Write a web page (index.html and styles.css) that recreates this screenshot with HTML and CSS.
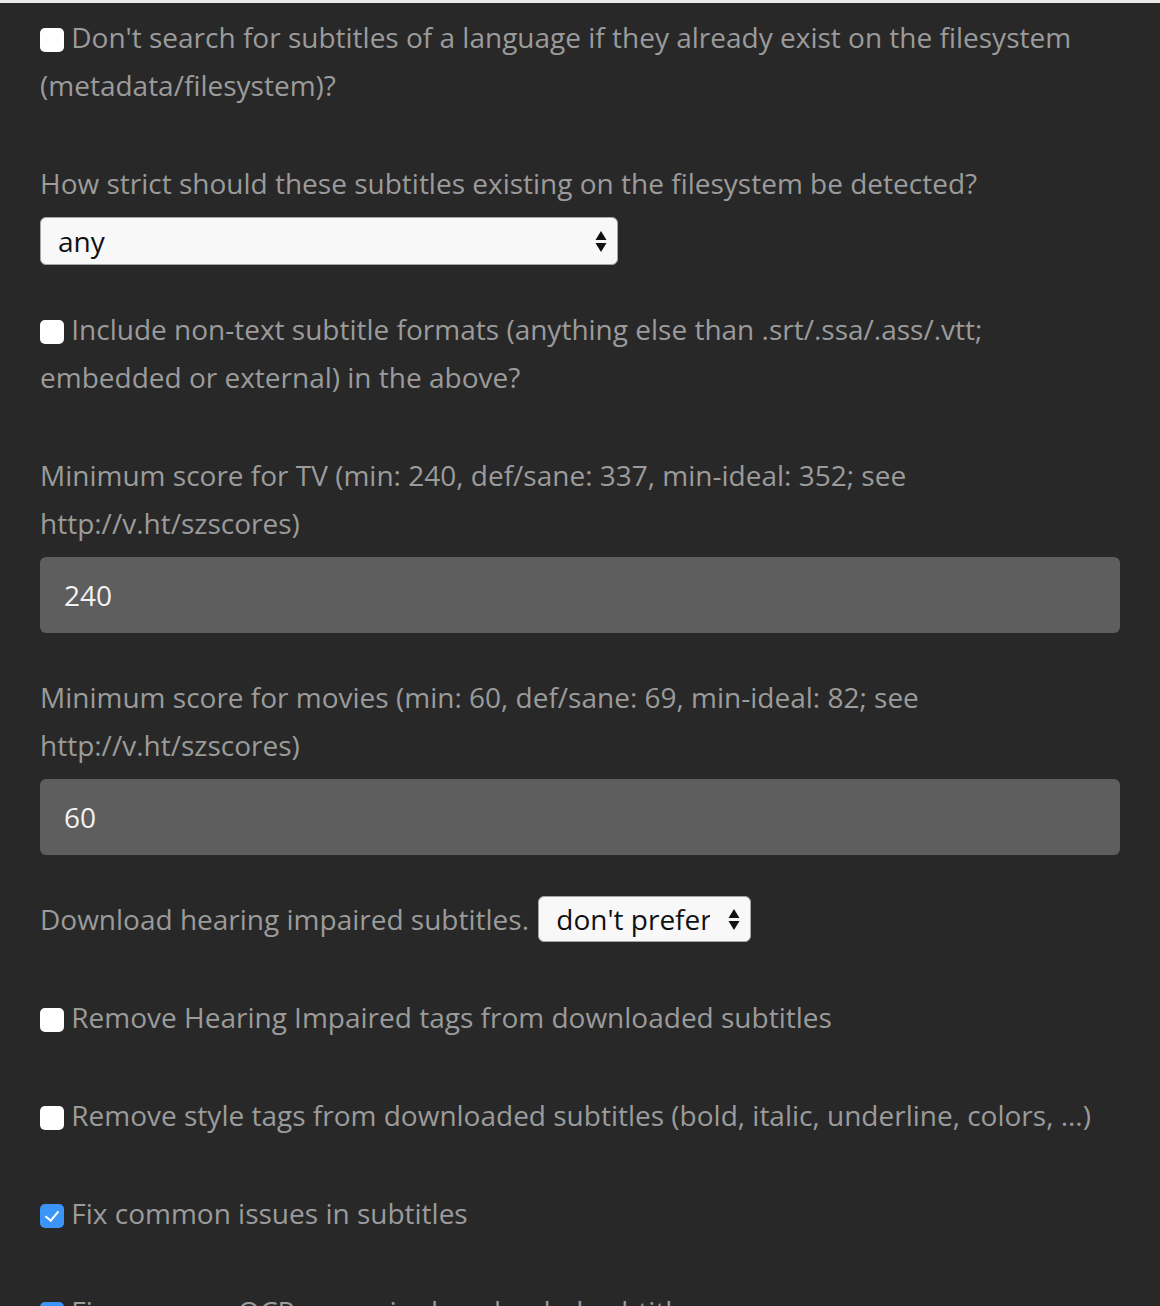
FILE: index.html
```html
<!DOCTYPE html>
<html lang="en">
<head>
    <meta charset="UTF-8">
    <title>Subtitle settings</title>
    <link rel="stylesheet" href="styles.css">
</head>
<body>
    <div class="topbar"></div>
    <form class="settings">
        <div class="group">
            <label class="check"><input type="checkbox"> Don't search for subtitles of a language if they already exist on the filesystem (metadata/filesystem)?</label>
        </div>

        <div class="group">
            <label class="field-label">How strict should these subtitles existing on the filesystem be detected?</label>
            <span class="select-wrap wide">
                <select>
                    <option>any</option>
                    <option>strict</option>
                </select>
                <svg class="arrows" width="12" height="26" viewBox="0 0 12 26"><path d="M6 3 L11.5 12 L0.5 12 Z M0.5 15 L11.5 15 L6 24 Z" fill="#111"/></svg>
            </span>
        </div>

        <div class="group">
            <label class="check"><input type="checkbox"> Include non-text subtitle formats (anything else than .srt/.ssa/.ass/.vtt; embedded or external) in the above?</label>
        </div>

        <div class="group">
            <label class="field-label">Minimum score for TV (min: 240, def/sane: 337, min-ideal: 352; see http://v.ht/szscores)</label>
            <input class="text" type="text" value="240">
        </div>

        <div class="group">
            <label class="field-label">Minimum score for movies (min: 60, def/sane: 69, min-ideal: 82; see http://v.ht/szscores)</label>
            <input class="text" type="text" value="60">
        </div>

        <div class="group">
            <label class="field-label inline">Download hearing impaired subtitles.
                <span class="select-wrap small">
                    <select>
                        <option>don't prefer</option>
                        <option>prefer</option>
                    </select>
                    <svg class="arrows" width="12" height="26" viewBox="0 0 12 26"><path d="M6 3 L11.5 12 L0.5 12 Z M0.5 15 L11.5 15 L6 24 Z" fill="#111"/></svg>
                </span>
            </label>
        </div>

        <div class="group">
            <label class="check"><input type="checkbox"> Remove Hearing Impaired tags from downloaded subtitles</label>
        </div>

        <div class="group">
            <label class="check"><input type="checkbox"> Remove style tags from downloaded subtitles (bold, italic, underline, colors, ...)</label>
        </div>

        <div class="group">
            <label class="check"><input type="checkbox" checked> Fix common issues in subtitles</label>
        </div>

        <div class="group">
            <label class="check"><input type="checkbox" checked> Fix common OCR errors in downloaded subtitles</label>
        </div>
    </form>
</body>
</html>
```

FILE: styles.css
```css
body {
    margin: 0;
    background-color: #282828;
    color: #9b9b9b;
    font-family: "Open Sans", sans-serif;
    font-size: 28px;
    line-height: 48px;
}
.topbar {
    height: 3px;
    background-color: #e9e9e9;
}
.settings {
    padding: 10px 40px 0 40px;
}
.group {
    margin-bottom: 40px;
}
.check, .field-label {
    display: block;
    padding-bottom: 10px;
}
.check input {
    appearance: none;
    -webkit-appearance: none;
    width: 24px;
    height: 24px;
    margin: 0;
    background-color: #fff;
    border-radius: 5px;
    vertical-align: -4px;
    position: relative;
}
.check input:checked {
    background-color: #3b95f6;
}
.check input:checked::after {
    content: "";
    position: absolute;
    left: 8px;
    top: 4px;
    width: 6px;
    height: 11px;
    border: solid #fff;
    border-width: 0 2px 2px 0;
    transform: rotate(40deg);
}
.select-wrap {
    position: relative;
    display: inline-block;
    vertical-align: top;
}
.select-wrap select {
    appearance: none;
    -webkit-appearance: none;
    display: block;
    height: 48px;
    padding: 0 40px 0 17px;
    background-color: #f8f8f8;
    border: 1px solid #a6a6a6;
    border-radius: 6px;
    color: #111;
    font-family: "Open Sans", sans-serif;
    font-size: 28px;
}
.select-wrap.wide select {
    width: 578px;
}
.select-wrap.small {
    margin: 1px 0 0 2px;
}
.select-wrap.small select {
    width: 213px;
    height: 46px;
}
.arrows {
    position: absolute;
    right: 11px;
    top: 50%;
    margin-top: -13px;
    pointer-events: none;
}
.text {
    display: block;
    box-sizing: border-box;
    width: 100%;
    height: 76px;
    padding: 0 24px;
    background-color: #5e5e5e;
    border: none;
    border-radius: 6px;
    color: #f2f2f2;
    font-family: "Open Sans", sans-serif;
    font-size: 28px;
}
```
